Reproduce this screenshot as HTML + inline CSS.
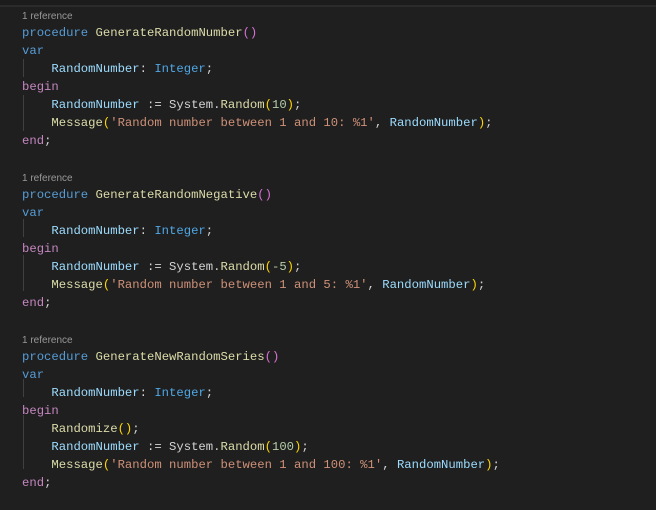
<!DOCTYPE html>
<html><head><style>
body{margin:0;width:656px;height:510px;background:#1f1f1f;overflow:hidden;position:relative}
.bar{position:absolute;left:0;top:0;width:656px;height:5px;background:#1c1c1c;border-bottom:2px solid #2b2b2b}
.code{position:absolute;left:22px;top:6px;font-family:"Liberation Mono",monospace;font-size:12.25px;color:#d4d4d4}
.r{height:18px;line-height:18px;white-space:pre}
.cl{font-family:"Liberation Sans",sans-serif;font-size:10px;color:#999;line-height:21px}
.k{color:#569cd6}.f{color:#dcdcaa}.p{color:#da70d6}.v{color:#9cdcfe}.t{color:#4fa8e6}.b{color:#c586c0}.s{color:#ce9178}.n{color:#b5cea8}.g{color:#ffd700}.c{color:#d4d4d4}
.guide{position:absolute;left:23px;width:1px;background:#404040}
</style></head><body>
<div class="bar"></div>
<div class="guide" style="top:59px;height:18px"></div>
<div class="guide" style="top:95px;height:36px"></div>
<div class="guide" style="top:219px;height:18px"></div>
<div class="guide" style="top:255px;height:36px"></div>
<div class="guide" style="top:379px;height:18px"></div>
<div class="guide" style="top:415px;height:54px"></div>
<div class="code"><div class="r cl">1 reference</div><div class="r"><span class="k">procedure</span> <span class="f">GenerateRandomNumber</span><span class="p">()</span></div><div class="r"><span class="k">var</span></div><div class="r">    <span class="v">RandomNumber</span>: <span class="t">Integer</span>;</div><div class="r"><span class="b">begin</span></div><div class="r">    <span class="v">RandomNumber</span> := <span class="c">System</span>.<span class="f">Random</span><span class="g">(</span><span class="n">10</span><span class="g">)</span>;</div><div class="r">    <span class="f">Message</span><span class="g">(</span><span class="s">'Random number between 1 and 10: %1'</span>, <span class="v">RandomNumber</span><span class="g">)</span>;</div><div class="r"><span class="b">end</span>;</div><div class="r"></div><div class="r cl">1 reference</div><div class="r"><span class="k">procedure</span> <span class="f">GenerateRandomNegative</span><span class="p">()</span></div><div class="r"><span class="k">var</span></div><div class="r">    <span class="v">RandomNumber</span>: <span class="t">Integer</span>;</div><div class="r"><span class="b">begin</span></div><div class="r">    <span class="v">RandomNumber</span> := <span class="c">System</span>.<span class="f">Random</span><span class="g">(</span><span class="n">-5</span><span class="g">)</span>;</div><div class="r">    <span class="f">Message</span><span class="g">(</span><span class="s">'Random number between 1 and 5: %1'</span>, <span class="v">RandomNumber</span><span class="g">)</span>;</div><div class="r"><span class="b">end</span>;</div><div class="r"></div><div class="r cl">1 reference</div><div class="r"><span class="k">procedure</span> <span class="f">GenerateNewRandomSeries</span><span class="p">()</span></div><div class="r"><span class="k">var</span></div><div class="r">    <span class="v">RandomNumber</span>: <span class="t">Integer</span>;</div><div class="r"><span class="b">begin</span></div><div class="r">    <span class="f">Randomize</span><span class="g">()</span>;</div><div class="r">    <span class="v">RandomNumber</span> := <span class="c">System</span>.<span class="f">Random</span><span class="g">(</span><span class="n">100</span><span class="g">)</span>;</div><div class="r">    <span class="f">Message</span><span class="g">(</span><span class="s">'Random number between 1 and 100: %1'</span>, <span class="v">RandomNumber</span><span class="g">)</span>;</div><div class="r"><span class="b">end</span>;</div></div>
</body></html>
